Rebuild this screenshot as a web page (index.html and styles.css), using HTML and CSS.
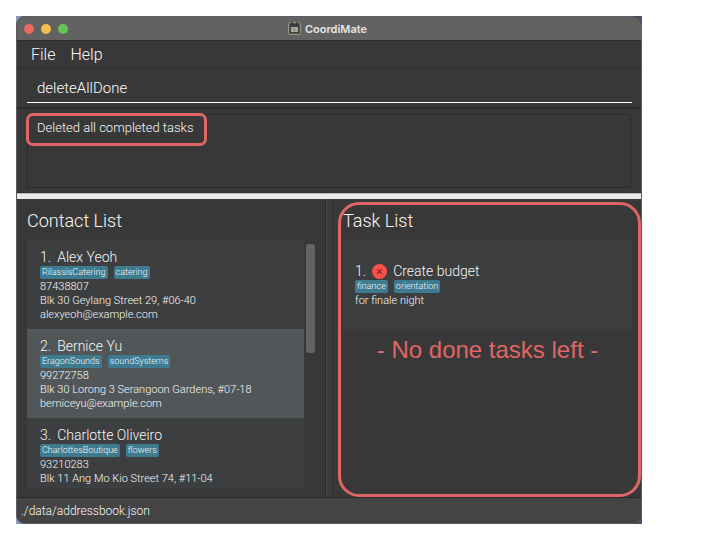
FILE: index.html
```html
<!DOCTYPE html>
<html lang="en">
<head>
<meta charset="utf-8">
<title>CoordiMate</title>
<link rel="stylesheet" href="styles.css">
</head>
<body>
<div class="desktop">
<main class="window">
  <header class="titlebar">
    <div class="lights">
      <button class="light close" aria-label="Close"></button>
      <button class="light minimise" aria-label="Minimise"></button>
      <button class="light zoom" aria-label="Zoom"></button>
    </div>
    <h1 class="app-title">
      <svg class="app-icon" viewBox="0 0 13 13" aria-hidden="true">
        <rect x=".5" y=".5" width="12" height="12" rx="1" fill="#55554f" stroke="#999581"/>
        <path d="M2 2h9v9H2z" fill="#3d4043"/>
        <path d="M3 5h7v5H3z" fill="#a5a7a6"/>
        <path d="M4 0v3M9 0v3" stroke="#34373a" stroke-width="1.5"/>
        <circle cx="6.5" cy="7.5" r="1.5" fill="#a59359"/>
      </svg>
      CoordiMate
    </h1>
  </header>
  <nav class="menu">
    <button class="menu-item">File</button>
    <button class="menu-item">Help</button>
  </nav>
  <div class="command">
    <input class="command-input" type="text" aria-label="Command" value="deleteAllDone">
  </div>
  <section class="result">
    <div class="result-box">
      <output class="result-text">Deleted all completed tasks</output>
    </div>
  </section>
  <div class="splitter"></div>
  <div class="panes">
    <section class="pane">
      <h2 class="pane-title">Contact List</h2>
      <div class="list-area">
        <ul class="list">
          <li class="card">
            <h3 class="name"><span class="index">1.</span>Alex Yeoh</h3>
            <div class="tags"><span class="tag">RilassisCatering</span><span class="tag">catering</span></div>
            <p class="detail">87438807</p>
            <p class="detail">Blk 30 Geylang Street 29, #06-40</p>
            <p class="detail">alexyeoh@example.com</p>
          </li>
          <li class="card alternate">
            <h3 class="name"><span class="index">2.</span>Bernice Yu</h3>
            <div class="tags"><span class="tag">EragonSounds</span><span class="tag">soundSystems</span></div>
            <p class="detail">99272758</p>
            <p class="detail">Blk 30 Lorong 3 Serangoon Gardens, #07-18</p>
            <p class="detail">berniceyu@example.com</p>
          </li>
          <li class="card">
            <h3 class="name"><span class="index">3.</span>Charlotte Oliveiro</h3>
            <div class="tags"><span class="tag">CharlottesBoutique</span><span class="tag">flowers</span></div>
            <p class="detail">93210283</p>
            <p class="detail">Blk 11 Ang Mo Kio Street 74, #11-04</p>
            <p class="detail">charlotte@example.com</p>
          </li>
        </ul>
        <div class="scroll-track"><div class="scroll-thumb"></div></div>
      </div>
    </section>
    <div class="divider"></div>
    <section class="pane task-pane">
      <h2 class="pane-title">Task List</h2>
      <ul class="list">
        <li class="card task">
          <h3 class="name"><span class="index">1.</span><svg class="status" viewBox="0 0 16 16" aria-label="Not done"><circle cx="8" cy="8" r="8" fill="#fb4f49"/><path d="M5.500 5.500l5 5M10.500 5.500l-5 5" stroke="#7e2422" stroke-width="1.3"/></svg>Create budget</h3>
          <div class="tags"><span class="tag">finance</span><span class="tag">orientation</span></div>
          <p class="detail">for finale night</p>
        </li>
      </ul>
      <p class="note">- No done tasks left -</p>
    </section>
  </div>
  <footer class="status-bar">./data/addressbook.json</footer>
</main>
</div>
</body>
</html>
```
FILE: styles.css
```css
* {
  box-sizing: border-box;
}

body {
  margin: 0;
  padding: 16px 78px 16px 16px;
  background: #fff;
  color: #f8f8f8;
  font-family: Roboto, "Liberation Sans", sans-serif;
  font-weight: 300;
}

h1, h2, h3, p, ul {
  margin: 0;
  padding: 0;
  font-weight: 300;
  list-style: none;
}

button, input {
  border: 0;
  padding: 0;
  background: none;
  color: inherit;
  font: inherit;
}

.desktop {
  height: calc(100vh - 32px);
  background: linear-gradient(90deg, #8e9bb5, #1d2738 8%, #111722 96%, #43557a);
}

.window {
  display: flex;
  flex-direction: column;
  height: 100%;
  border: 1px solid #5c5d60;
  border-radius: 9px;
  overflow: hidden;
  background: #383838;
}

.titlebar {
  display: grid;
  grid-template-columns: 1fr auto 1fr;
  align-items: center;
  height: 24px;
  flex: none;
  padding: 0 10px 0 7px;
  background: #626262;
  border-bottom: 1px solid #2c2c2c;
}

.lights {
  display: flex;
  gap: 7px;
}

.light {
  width: 10px;
  height: 10px;
  border-radius: 50%;
}

.close { background: #ed6a5e; }
.minimise { background: #f5bf4f; }
.zoom { background: #61c554; }

.app-title {
  display: flex;
  align-items: center;
  gap: 4px;
  font: 600 11px/16px Inter, sans-serif;
  color: #e6e6e6;
}

.app-icon {
  width: 13px;
  height: 13px;
}

.menu {
  display: flex;
  gap: 15px;
  height: 27px;
  flex: none;
  padding-left: 14px;
  border-bottom: 1px solid #303030;
}

.menu-item {
  font-size: 16px;
}

.command {
  flex: none;
  height: 40px;
  padding: 7px 9px 4px 10px;
  border-bottom: 1px solid #292929;
}

.command-input {
  display: block;
  width: 100%;
  height: 28px;
  padding: 0 10px 2px;
  border-bottom: 1px solid #fff;
  color: #fff;
  font-size: 15px;
}

.result {
  flex: none;
  height: 85px;
  padding: 5px 10px 4px;
  border-top: 1px solid #303030;
  border-bottom: 1px solid #303030;
}

.result-box {
  position: relative;
  height: 74px;
  border: 1px solid #2b2b2b;
}

.result-text {
  position: absolute;
  top: -2px;
  left: -2px;
  padding: 4px 10px 7px 8px;
  border: 3px solid #e06666;
  border-radius: 7px;
  font-size: 13px;
  line-height: 16px;
}

.splitter {
  flex: none;
  height: 6px;
  border-top: 1px solid #bbb;
  background: #e9ebea;
}

.panes {
  display: grid;
  grid-template-columns: 1fr 8px 1fr;
  flex: 1;
  min-height: 0;
  border-bottom: 1px solid #2a2a2a;
}

.pane {
  display: flex;
  flex-direction: column;
  min-height: 0;
  padding: 10px 9px 9px 10px;
}

.divider {
  border: 1px solid #2b2b2b;
  border-width: 0 1px;
  background: linear-gradient(90deg, #484848 1px, #3c3c3c 1px);
}

.pane-title {
  flex: none;
  height: 31px;
  font-size: 18px;
  line-height: 24px;
}

.list-area {
  display: flex;
  flex: 1;
  min-height: 0;
  gap: 2px;
}

.list-area .list {
  flex: 1;
  overflow: hidden;
}

.scroll-track {
  width: 10px;
  padding-top: 4px;
}

.scroll-thumb {
  width: 9px;
  height: 109px;
  border-radius: 3px;
  background: #636363;
}

.card {
  display: flex;
  flex-direction: column;
  justify-content: center;
  min-height: 89px;
  padding: 9px 13px 7px;
  background: #3c3e3f;
}

.task-pane .card {
  padding-left: 12px;
}

.alternate {
  background: #515658;
}

.name {
  display: flex;
  align-items: center;
  font-size: 14px;
  line-height: 17px;
}

.index {
  margin-right: 6px;
}

.status {
  width: 15px;
  height: 15px;
  margin-right: 6px;
}

.tags {
  display: flex;
  gap: 6px;
  margin-bottom: 1px;
}

.tag {
  padding: 0 2px;
  border-radius: 2px;
  background: #3e7b91;
  font-size: 9px;
  line-height: 13px;
}

.detail {
  font-size: 11px;
  line-height: 14px;
}

.task-pane {
  position: relative;
}

.task-pane::after {
  content: "";
  position: absolute;
  inset: 3px 0 0 5px;
  border: 3px solid #e06666;
  border-radius: 21px;
}

.note {
  margin-top: 7px;
  color: #e06666;
  font: 24px/28px "Liberation Sans", Arial, sans-serif;
  text-align: center;
}

.status-bar {
  flex: none;
  height: 25px;
  padding-left: 4px;
  background: #444;
  font-size: 12px;
  line-height: 26px;
}
```
